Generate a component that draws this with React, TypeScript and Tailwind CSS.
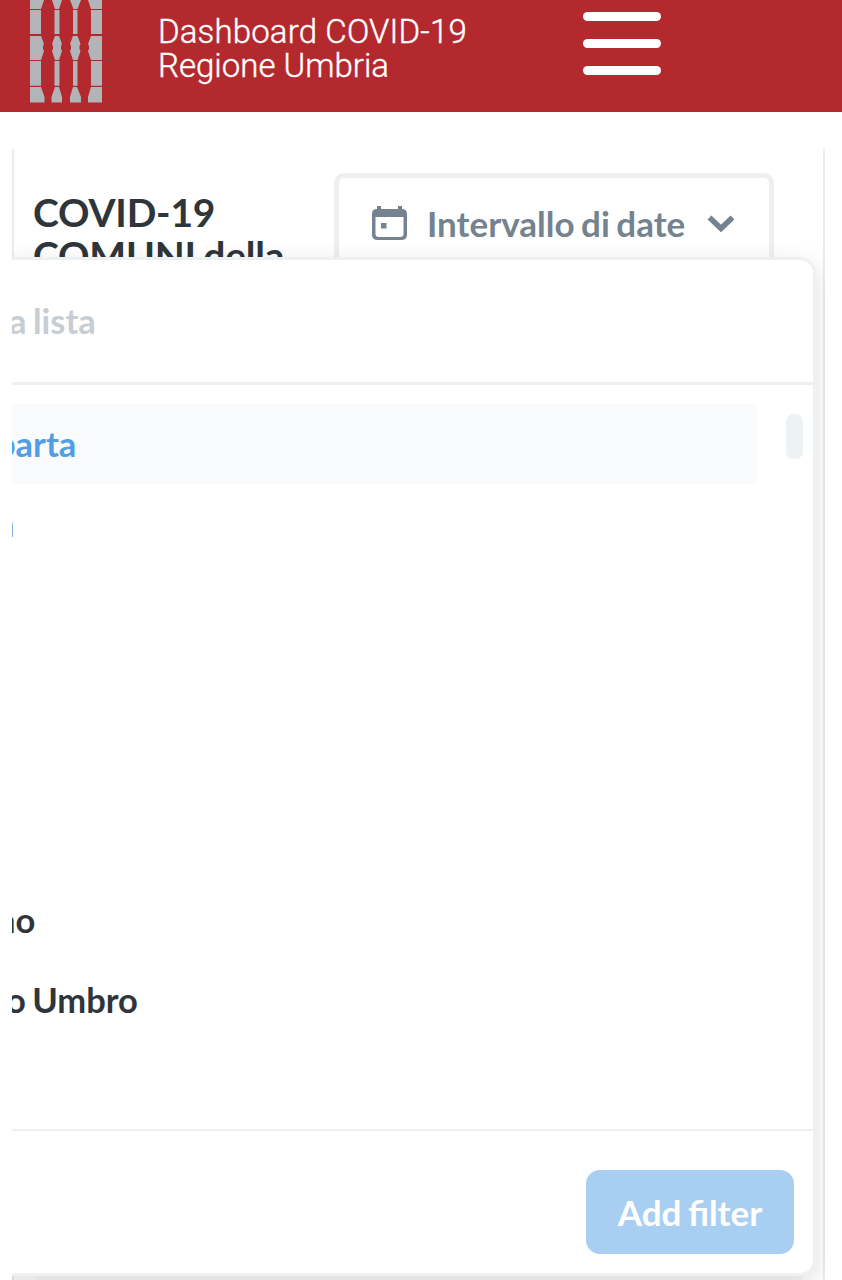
import type { ReactNode } from "react";

function Logo() {
  return (
    <svg width="72" height="103" viewBox="0 0 72 103" fill="#b3b4b8" className="shrink-0">
      <path d="M0 0H14L11 9H0ZM22 0H32L29 9H25ZM40 0H51L47.500 9H43.500ZM58 0H72V9H61Z" />
      <path d="M0 10H11V34H0ZM24.500 10H29.500V34H24.500ZM43 10H47.500V34H43ZM61 10H72V34H61Z" />
      <path d="M0 36H11L14 44L13 46V49L14 51L11 60H0ZM25 36H29L32 44L31 46V49L32 51L29 60H25L22 51L23 49V46L22 44ZM43 36H47.500L50.500 44L49.500 46V49L50.500 51L47.500 60H43L40 51L41 49V46L40 44ZM61 36H72V60H61L58 51L59 49V46L58 44Z" />
      <path d="M0 61H11V86H0ZM24.500 61H29.500V86H24.500ZM43 61H47.500V86H43ZM61 61H72V86H61Z" />
      <path d="M0 87H11L14.500 97V102.500H0ZM25 87H29L32 97V102.500H21.500V97ZM43 87H47L51 97V102.500H40V97ZM61 87H72V102.500H58V97Z" />
      <path d="M0 9.500H72M0 34.700H72M0 60.500H72M0 86.200H72" stroke="#b4292e" strokeWidth="1.100" />
    </svg>
  );
}

function Header() {
  return (
    <header className="flex h-28 items-start bg-[#b4292e] pl-[30px] text-white">
      <Logo />
      <h1 className="ml-14 w-[425px] pt-[15px] font-['Roboto',sans-serif] text-[33px] leading-[34px] font-light whitespace-nowrap [-webkit-text-stroke:0.4px_white] [word-spacing:0px]">
        <span className="block tracking-[0.15px]">Dashboard COVID-19</span>
        <span className="block">Regione Umbria</span>
      </h1>
      <div className="flex w-[78px] flex-col gap-[17.5px] pt-[11.5px]">
        <span className="h-[9.5px] rounded-full bg-white" />
        <span className="h-[9.5px] rounded-full bg-white" />
        <span className="h-[9.5px] rounded-full bg-white" />
      </div>
    </header>
  );
}

function DateFilter() {
  return (
    <div className="mt-6 flex h-[105px] w-[440px] items-start rounded-[10px] border-[5px] border-[#efefef] pt-7 pl-[33px] text-[#74838f]">
      <svg width="35" height="35" viewBox="0 0 35 35" fill="none" className="shrink-0">
        <path d="M5 0H9V3H26V0H30V3Q35 3 35 8V29Q35 34 29 34H6Q0 34 0 29V8Q0 3 5 3ZM3.500 11V28Q3.500 31 7 31H28Q31.500 31 31.500 28V11Z" fill="currentColor" fillRule="evenodd" />
        <rect x="9" y="17" width="5.500" height="5.500" fill="currentColor" />
      </svg>
      <span className="ml-5 w-[260px] text-[35px] leading-[34px] font-bold whitespace-nowrap">Intervallo di date</span>
      <svg width="28" height="17" viewBox="0 0 28 17" fill="none" className="mt-[9px] ml-5 shrink-0">
        <path d="M2.500 2.500L14 13.500L25.500 2.500" stroke="currentColor" strokeWidth="5.500" />
      </svg>
    </div>
  );
}

function Option({ children }: { children?: ReactNode }) {
  return <li className="flex h-[79.3px] items-center whitespace-nowrap">{children}</li>;
}

function FilterMenu() {
  return (
    <div className="absolute top-[108px] -left-5 flex h-[1019px] w-[824px] flex-col rounded-[16px] border-[3px] border-[#eef1f2] bg-white text-[34.500px] font-bold text-[#2e353b] shadow-[0_8px_26px_rgba(0,0,0,0.13)]">
      <div className="flex h-[125px] items-center border-b-[3px] border-[#efeff0] pt-px pl-[14px] leading-none text-[#c7cdd2]">
        <span>a lista</span>
      </div>
      <div className="flex h-[744px] justify-between pt-[19px] pr-[10px]">
        <ul className="w-[762px]">
          <li className="flex h-20 items-center rounded-[6px] bg-[#f9fbfd] text-[#509ee3]">
            <span className="ml-px">parta</span>
          </li>
          <Option><span className="text-[#74797d]">n</span></Option>
          <Option />
          <Option />
          <Option />
          <Option />
          <Option><span className="ml-px">no</span></Option>
          <Option><span className="ml-[11px]">o Umbro</span></Option>
        </ul>
        <div className="mt-[10px] h-[45px] w-[17px] rounded-[7px] bg-[#edf2f5]" />
      </div>
      <div className="flex grow justify-end border-t-2 border-[#efeff0] pt-[39px] pr-[19px]">
        <button className="h-[84px] w-[208px] rounded-[14px] bg-[#a8cef1] text-[35px] font-bold text-white [word-spacing:-2px]">Add filter</button>
      </div>
    </div>
  );
}

export default function App() {
  return (
    <div className="flex h-[1280px] flex-col overflow-hidden bg-white font-['Lato',sans-serif] [word-spacing:-2px]">
      <Header />
      <main className="relative mt-[37px] ml-3 h-[1131px] w-[813px] overflow-hidden">
        <section className="flex h-full flex-col justify-between border-x-2 border-[#ececed]">
          <div className="flex justify-between pr-[49px] pl-[19px]">
            <h2 className="pt-[42px] text-[39px] leading-[43px] font-bold tracking-[-0.2px] text-[#2e353b]">
              <span className="block">COVID-19</span>
              <span className="block">COMUNI della</span>
            </h2>
            <DateFilter />
          </div>
          <div className="mr-5 ml-[22px] h-[6px] bg-[#fafafa]" />
        </section>
        <FilterMenu />
      </main>
    </div>
  );
}
